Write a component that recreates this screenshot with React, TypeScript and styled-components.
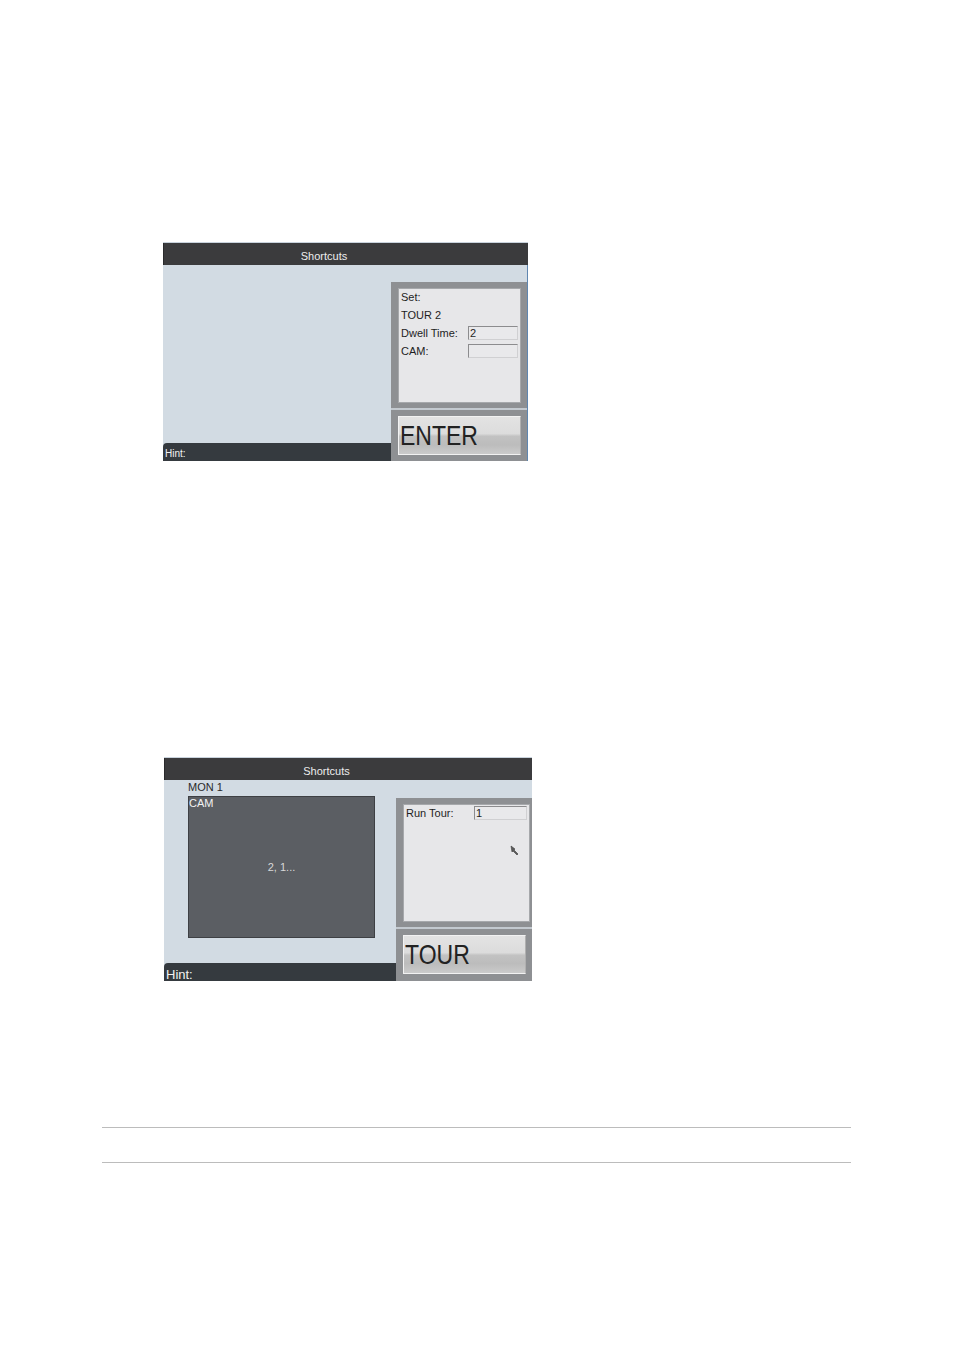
import React from 'react'
import styled, { createGlobalStyle } from 'styled-components'

const Global = createGlobalStyle`
  html, body { margin: 0; padding: 0; background: #ffffff; }
  body { font-family: "Liberation Sans", Arial, sans-serif; }
`

const Page = styled.div`
  width: 954px;
  min-height: 1349px;
  padding-top: 242px;
  box-sizing: border-box;
  display: flex;
  flex-direction: column;
`

const Screen = styled.div<{ $left: number; $w: number; $h: number; $top?: number }>`
  margin-left: ${p => p.$left}px;
  margin-top: ${p => p.$top || 0}px;
  width: ${p => p.$w}px;
  height: ${p => p.$h}px;
  display: grid;
  grid-template-rows: 22px 1fr;
  background: #d2dbe3;
  border-top: 1px solid #c9d3dd;
  box-sizing: border-box;
  overflow: hidden;
`

const TitleBar = styled.div`
  background: #3b3b3d;
  color: #ededed;
  font-size: 11px;
  display: flex;
  align-items: center;
  justify-content: center;
  padding: 4px 44px 0 0;
  border-left: 1px solid #2a2a2c;
`

const Body = styled.div<{ $edge?: boolean }>`
  display: flex;
  min-height: 0;
  border-right: ${p => (p.$edge ? '1px solid #5f86b0' : 'none')};
`

const Left = styled.div`
  flex: 1;
  display: flex;
  flex-direction: column;
  min-width: 0;
`

const Content = styled.div<{ $pad: number }>`
  flex: 1;
  padding-left: ${p => p.$pad}px;
  display: flex;
  flex-direction: column;
`

const MonLabel = styled.div`
  font-size: 11px;
  color: #2a2a2a;
  height: 16px;
  line-height: 14px;
`

const CamBox = styled.div`
  width: 187px;
  height: 142px;
  background: #5b5e63;
  border: 1px solid #3e4044;
  box-sizing: border-box;
  display: flex;
  flex-direction: column;
  color: #e6e6e6;
  font-size: 11px;
`

const CamLabel = styled.div`
  color: #f2f2f2;
  line-height: 12px;
`

const CamValue = styled.div`
  flex: 1;
  display: flex;
  align-items: center;
  justify-content: center;
  padding-bottom: 12px;
  color: #d8d8d8;
`

const HintBar = styled.div<{ $size: number }>`
  height: 18px;
  background: #353a3f;
  border-top-left-radius: 4px;
  color: #f2f2f2;
  font-size: ${p => p.$size}px;
  line-height: ${p => (p.$size > 11 ? 23 : 21)}px;
  padding-left: 2px;
  overflow: hidden;
`

const Right = styled.div<{ $w: number; $gap: number }>`
  width: ${p => p.$w}px;
  flex-shrink: 0;
  padding-top: ${p => p.$gap}px;
  display: flex;
  flex-direction: column;
`

const Panel = styled.div<{ $h: number }>`
  height: ${p => p.$h}px;
  background: #8e9093;
  padding: 6px 6px 5px 7px;
  box-sizing: border-box;
  display: flex;
`

const PanelInner = styled.div`
  flex: 1;
  background: #e7e7e9;
  border: 1px solid #a6a8ab;
  padding: 1px 2px 0;
  position: relative;
  display: flex;
  flex-direction: column;
  font-size: 11px;
  color: #1e1e1e;
`

const Row = styled.div`
  height: 18px;
  line-height: 14px;
  display: flex;
  align-items: flex-start;
`

const RowLabel = styled.span<{ $w: number }>`
  width: ${p => p.$w}px;
  flex-shrink: 0;
`

const Field = styled.div<{ $w: number }>`
  width: ${p => p.$w}px;
  height: 14px;
  margin-top: 0;
  box-sizing: border-box;
  background: #e9e9eb;
  border: 1px solid #d0d0d2;
  border-top-color: #8c8c8e;
  border-left-color: #8c8c8e;
  font-size: 11px;
  line-height: 12px;
  padding-left: 1px;
`

const Cursor = styled.svg`
  position: absolute;
  right: 9px;
  top: 40px;
`

const Separator = styled.div`
  height: 2px;
  background: #c3c9cf;
`

const ButtonFrame = styled.div`
  flex: 1;
  background: #8e9093;
  padding: 6px 6px 6px 7px;
  display: flex;
`

const BigButton = styled.div`
  flex: 1;
  height: 39px;
  box-sizing: border-box;
  border: 1px solid #f2f2f2;
  border-right-color: #b0b0b0;
  background: linear-gradient(
    #e3e3e3 0%,
    #dcdcdc 45%,
    #c2c2c2 52%,
    #bcbcbc 75%,
    #cbcbcb 100%
  );
  display: flex;
  align-items: flex-end;
  padding: 0 0 8px 1px;
`

const ButtonText = styled.span`
  color: #222222;
  font-size: 23px;
  line-height: 17px;
  display: inline-block;
  transform: scaleY(1.18);
  transform-origin: left bottom;
`

const Rule = styled.div<{ $top: number }>`
  margin-left: 102px;
  margin-top: ${p => p.$top}px;
  width: 749px;
  height: 1px;
  background: #bcbcbc;
`

export default function App() {
  return (
    <Page>
      <Global />

      <Screen $left={163} $w={365} $h={219}>
        <TitleBar>Shortcuts</TitleBar>
        <Body $edge>
          <Left>
            <Content $pad={0} />
            <HintBar $size={10}>Hint:</HintBar>
          </Left>
          <Right $w={136} $gap={17}>
            <Panel $h={126}>
              <PanelInner>
                <Row>Set:</Row>
                <Row>TOUR 2</Row>
                <Row>
                  <RowLabel $w={67}>Dwell Time:</RowLabel>
                  <Field $w={50}>2</Field>
                </Row>
                <Row>
                  <RowLabel $w={67}>CAM:</RowLabel>
                  <Field $w={50} />
                </Row>
              </PanelInner>
            </Panel>
            <Separator />
            <ButtonFrame>
              <BigButton>
                <ButtonText>ENTER</ButtonText>
              </BigButton>
            </ButtonFrame>
          </Right>
        </Body>
      </Screen>

      <Screen $left={164} $w={368} $h={224} $top={296}>
        <TitleBar>Shortcuts</TitleBar>
        <Body>
          <Left>
            <Content $pad={24}>
              <MonLabel>MON 1</MonLabel>
              <CamBox>
                <CamLabel>CAM</CamLabel>
                <CamValue>2, 1...</CamValue>
              </CamBox>
            </Content>
            <HintBar $size={13}>Hint:</HintBar>
          </Left>
          <Right $w={136} $gap={18}>
            <Panel $h={129}>
              <PanelInner>
                <Row>
                  <RowLabel $w={68}>Run Tour:</RowLabel>
                  <Field $w={53}>1</Field>
                </Row>
                <Cursor width="10" height="12" viewBox="0 0 10 12">
                  <path
                    d="M1 1 L5 4 L4 5 L8 9 L7 10 L3 6 L2 7 Z"
                    fill="#5a5a5a"
                    stroke="#3c3c3c"
                    strokeWidth="0.6"
                  />
                </Cursor>
              </PanelInner>
            </Panel>
            <Separator />
            <ButtonFrame>
              <BigButton>
                <ButtonText>TOUR</ButtonText>
              </BigButton>
            </ButtonFrame>
          </Right>
        </Body>
      </Screen>

      <Rule $top={146} />
      <Rule $top={34} />
    </Page>
  )
}
